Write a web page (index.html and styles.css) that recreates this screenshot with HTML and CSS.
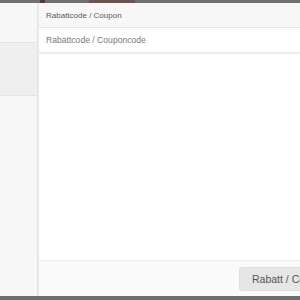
FILE: index.html
```html
<!DOCTYPE html>
<html>
<head>
<meta charset="utf-8">
<link rel="stylesheet" href="styles.css">
</head>
<body>
<div class="topbar">
  <span class="blob blob-a"></span>
  <span class="blob blob-b"></span>
</div>
<div class="app">
  <aside class="side">
    <div class="side-top"></div>
    <div class="side-active"></div>
    <div class="side-rest"></div>
  </aside>
  <main class="panel">
    <div class="panel-head">Rabattcode / Coupon</div>
    <div class="panel-row">Rabattcode / Couponcode</div>
    <div class="panel-body"></div>
    <div class="panel-foot">
      <button class="btn">Rabatt / Coupon</button>
    </div>
  </main>
</div>
<div class="bottombar"></div>
</body>
</html>
```
FILE: styles.css
```css
html, body {
  margin: 0;
  padding: 0;
  width: 300px;
  height: 300px;
  overflow: hidden;
  font-family: "Helvetica Neue", "Liberation Sans", Arial, sans-serif;
  background: #fff;
}
body {
  display: flex;
  flex-direction: column;
}
.topbar {
  height: 3px;
  background: #707070;
  display: flex;
  flex: none;
}
.blob {
  display: block;
  height: 3px;
}
.blob-a {
  margin-left: 40px;
  width: 5px;
  background: #5a3a30;
}
.blob-b {
  margin-left: 44px;
  width: 46px;
  background: #6a5450;
}
.app {
  flex: 1;
  display: flex;
  min-height: 0;
}
.side {
  width: 37px;
  flex: none;
  background: #f7f7f7;
  border-right: 1px solid #e3e3e3;
  display: flex;
  flex-direction: column;
}
.side-top {
  height: 39px;
  border-bottom: 1px solid #e4e4e4;
}
.side-active {
  height: 52px;
  background: #efefef;
  border-bottom: 1px solid #e4e4e4;
}
.side-rest {
  flex: 1;
}
.panel {
  flex: 1;
  display: flex;
  flex-direction: column;
  min-width: 0;
  border-left: 1px solid #ececec;
}
.panel-head {
  height: 24px;
  background: #f7f7f7;
  border-bottom: 1px solid #e6e6e6;
  font-size: 8px;
  color: #5a5a5a;
  padding-left: 7px;
  display: flex;
  align-items: center;
}
.panel-row {
  height: 24px;
  border-bottom: 2px solid #ededed;
  font-size: 8.6px;
  color: #7a7a7a;
  padding-left: 7px;
  display: flex;
  align-items: center;
}
.panel-body {
  flex: 1;
}
.panel-foot {
  height: 35px;
  background: #fafafa;
  border-top: 1px solid #ececec;
  display: flex;
  align-items: center;
  padding-left: 200px;
  overflow: hidden;
}
.btn {
  flex: none;
  height: 24px;
  padding: 0 12px;
  background: #e6e6e6;
  border: 1px solid #dedede;
  border-radius: 3px;
  font-family: inherit;
  font-size: 10.5px;
  color: #555;
  white-space: nowrap;
}
.bottombar {
  height: 4px;
  background: #6e6e6e;
  flex: none;
}
```
